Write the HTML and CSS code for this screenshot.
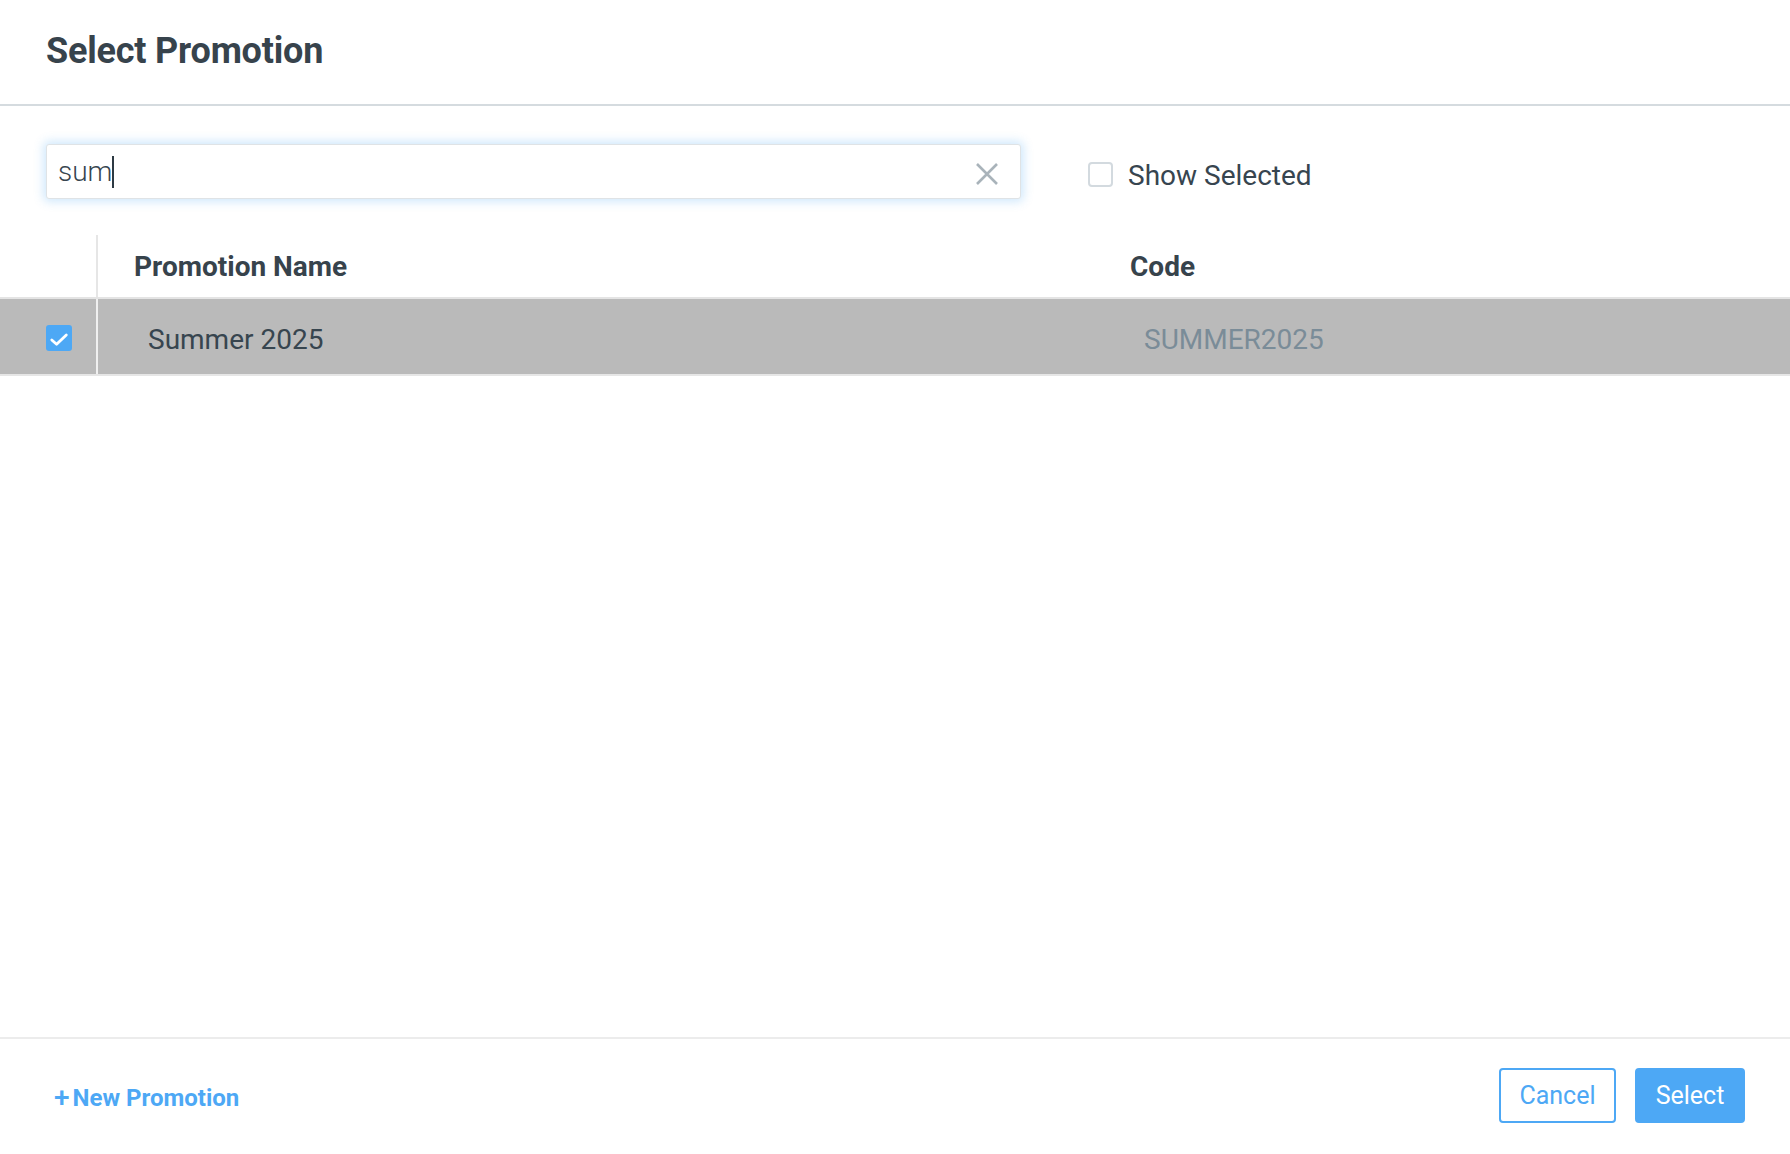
FILE: index.html
```html
<!DOCTYPE html>
<html>
<head>
<meta charset="utf-8">
<link rel="stylesheet" href="styles.css">
</head>
<body>
<div class="modal">
  <header class="modal-header">
    <h1 class="title">Select Promotion</h1>
  </header>
  <div class="modal-body">
    <div class="toolbar">
      <div class="search">
        <span class="search-text">sum</span><span class="caret"></span>
        <svg class="clear" width="24" height="24" viewBox="0 0 24 24"><path d="M2 2L22 22M22 2L2 22" stroke="#a9b3ba" stroke-width="2.6" fill="none"/></svg>
      </div>
      <label class="show-selected">
        <span class="box"></span>
        <span class="show-label">Show Selected</span>
      </label>
    </div>
    <div class="table">
      <div class="thead">
        <div class="col-check"></div>
        <div class="col-name th">Promotion Name</div>
        <div class="col-code th">Code</div>
      </div>
      <div class="row selected">
        <div class="col-check">
          <span class="box checked">
            <svg width="26" height="26" viewBox="0 0 26 26"><path d="M5.8 15L10.6 19.3L20.3 10" stroke="#fff" stroke-width="2.8" fill="none" stroke-linecap="round" stroke-linejoin="round"/></svg>
          </span>
        </div>
        <div class="col-name td">Summer 2025</div>
        <div class="col-code td code">SUMMER2025</div>
      </div>
    </div>
  </div>
  <footer class="modal-footer">
    <a class="new-link"><span class="plus">+</span>New Promotion</a>
    <div class="actions">
      <button class="btn btn-outline">Cancel</button>
      <button class="btn btn-primary">Select</button>
    </div>
  </footer>
</div>
</body>
</html>
```

FILE: styles.css
```css
* { box-sizing: border-box; }
html, body { margin: 0; padding: 0; }
body {
  font-family: Roboto, "Liberation Sans", sans-serif;
  color: #37454f;
  background: #fff;
}
.modal {
  height: 100vh;
  display: flex;
  flex-direction: column;
}
.modal-header {
  height: 106px;
  border-bottom: 2px solid #d5dbdf;
  padding: 0 0 0 46px;
  display: flex;
  align-items: flex-start;
}
.title {
  margin: 0;
  padding-top: 25px;
  font-size: 36px;
  font-weight: 700;
  color: #37434c;
  line-height: 52px;
  letter-spacing: -0.2px;
}
.modal-body {
  flex: 1;
}
.toolbar {
  display: flex;
  align-items: center;
  padding: 38px 0 0 46px;
}
.search {
  width: 975px;
  height: 55px;
  border: 1px solid #dfe3e6;
  border-radius: 3px;
  box-shadow: 0 0 10px 3px rgba(77, 166, 245, 0.25);
  display: flex;
  align-items: center;
  padding: 0 0 0 11px;
  position: relative;
  background: #fff;
}
.search-text {
  font-size: 28px;
  font-weight: 300;
  color: #37454f;
}
.caret {
  width: 2px;
  height: 32px;
  background: #2d3a43;
  margin-left: 0;
}
.clear {
  position: absolute;
  right: 21px;
  top: 17px;
}
.show-selected {
  display: flex;
  align-items: center;
  margin-left: 67px;
  margin-top: 5px;
}
.box {
  width: 25px;
  height: 25px;
  border: 2px solid #d3dadf;
  border-radius: 4px;
  display: inline-flex;
  align-items: center;
  justify-content: center;
  background: #fff;
}
.show-label {
  margin-left: 15px;
  font-size: 28px;
  color: #37454f;
  margin-top: 2px;
}
.table {
  margin-top: 36px;
}
.thead {
  display: flex;
  height: 64px;
  border-bottom: 2px solid #e4e4e4;
}
.row {
  display: flex;
  height: 77px;
  border-bottom: 2px solid #e6e6e6;
}
.row.selected { background: #bababa; }
.col-check {
  width: 98px;
  flex: none;
  border-right: 2px solid #e6e6e6;
  display: flex;
  align-items: center;
  padding-left: 46px;
}
.row .col-check { border-right-color: #f0f0f0; padding-top: 3px; }
.col-name {
  width: 996px;
  flex: none;
}
.col-code { flex: 1; }
.th {
  font-size: 28px;
  font-weight: 700;
  color: #37434c;
  padding: 15px 0 0 36px;
}
.td {
  display: flex;
  align-items: center;
  padding-left: 50px;
  padding-top: 5px;
  font-size: 28px;
  color: #37454f;
}
.td.code { color: #7a8c98; }
.box.checked {
  width: 26px;
  height: 26px;
  border: none;
  background: #4da8f5;
  border-radius: 3px;
}
.modal-footer {
  height: 117px;
  border-top: 2px solid #ececec;
  display: flex;
  align-items: center;
  justify-content: space-between;
  padding: 0 45px 0 54px;
}
.new-link {
  font-size: 24px;
  font-weight: 700;
  color: #4da8f5;
  display: flex;
  align-items: center;
  margin-top: 2px;
}
.plus {
  font-size: 28px;
  font-weight: 500;
  margin-right: 3px;
}
.actions {
  display: flex;
  gap: 19px;
  margin-top: -2px;
}
.btn {
  height: 55px;
  font-family: Roboto, "Liberation Sans", sans-serif;
  font-size: 25px;
  border-radius: 4px;
  cursor: pointer;
}
.btn-outline {
  width: 117px;
  background: #fff;
  border: 2px solid #4da8f5;
  color: #4da8f5;
}
.btn-primary {
  width: 110px;
  background: #4da8f5;
  border: 2px solid #4da8f5;
  color: #fff;
}
```
